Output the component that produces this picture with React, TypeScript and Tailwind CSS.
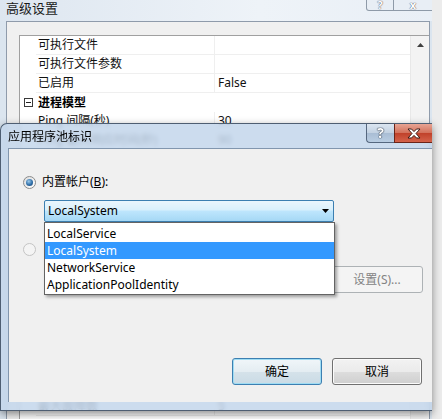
import React from 'react';

const font = "font-['Noto_Sans','Noto_Sans_CJK_SC',sans-serif]";

type Row = { name: string; value?: string; category?: boolean };

const rows: Row[] = [
  { name: '可执行文件' },
  { name: '可执行文件参数' },
  { name: '已启用', value: 'False' },
  { name: '进程模型', category: true },
  { name: 'Ping 间隔(秒)', value: '30' },
  { name: 'Ping 最大响应时间(秒)', value: '90' },
  { name: '标识', value: 'ApplicationPoolIdentity' },
  { name: '加载用户配置文件', value: 'False' },
  { name: '启动时间限制(秒)', value: '90' },
  { name: '已启用 Ping', value: 'True' },
  { name: '关闭时间限制(秒)', value: '90' },
  { name: '空闲超时(分钟)', value: '20' },
  { name: '最大工作进程数', value: '1' },
  { name: '进程孤立', value: '' },
  { name: '可执行文件', value: '' },
  { name: '已启用', value: 'False' },
  { name: '快速故障防护', value: '' },
  { name: '服务不可用响应类型', value: 'HttpLevel' },
  { name: '故障间隔(分钟)', value: '5' },
  { name: '最大故障数', value: '5' },
];

const accounts = ['LocalService', 'LocalSystem', 'NetworkService', 'ApplicationPoolIdentity'];

function PropertyRow({ row }: { row: Row }) {
  if (row.category) {
    return (
      <div className="flex h-[19px] shrink-0 items-center">
        <div className="flex w-[16px] justify-center">
          <div className="flex h-[9px] w-[9px] items-center justify-center border border-[#3a3a3a] bg-white">
            <div className="h-px w-[5px] bg-[#222]" />
          </div>
        </div>
        <span className="pl-[2px] text-[12px] font-bold leading-[19px] text-black">{row.name}</span>
      </div>
    );
  }
  return (
    <div className="flex h-[19px] shrink-0">
      <div className="w-[16px]" />
      <div className="w-[179px] truncate border-r border-b border-[#efefef] pl-[2px] text-[12px] leading-[18px] text-[#111]">
        {row.name}
      </div>
      <div className="flex-1 truncate border-b border-[#efefef] pl-[3px] text-[12px] leading-[18px] text-[#111]">
        {row.value}
      </div>
    </div>
  );
}

function Radio({ checked, disabled }: { checked?: boolean; disabled?: boolean }) {
  return (
    <div
      className={`flex h-[13px] w-[13px] items-center justify-center rounded-full border ${
        disabled
          ? 'border-[#c4c4c4] bg-[#f4f4f4]'
          : 'border-[#8b8b8b] bg-[linear-gradient(135deg,#dcdcdc,#ffffff)]'
      }`}
    >
      {checked && (
        <div className="h-[7px] w-[7px] rounded-full bg-[radial-gradient(circle_at_40%_35%,#9ccaeb_0%,#2f6ea8_55%,#173f6b_100%)]" />
      )}
    </div>
  );
}

export default function App() {
  return (
    <div className={`relative flex h-[419px] w-[442px] overflow-hidden bg-[#ececec] ${font}`}>
      {/* background window: 高级设置 */}
      <div className="flex h-full w-[432px] flex-col bg-[#dbe5ef]">
        <div className="flex h-[21px] shrink-0 items-start justify-between bg-[linear-gradient(to_right,#dde6f0,#eef3f8_60%,#e9eff6)]">
          <span className="pt-px pl-[6px] text-[13px] leading-[15px] text-[#1a1a1a]">高级设置</span>
          <div className="flex">
            <div className="flex h-[11px] w-[28px] items-end justify-center rounded-bl-[3px] border-r border-b border-l border-[#8e9aa8] bg-[#e8eef5] text-[11px] font-bold leading-[11px] text-white [text-shadow:0_0_1px_#556,0_0_1px_#556]">
              ?
            </div>
            <div className="flex h-[11px] w-[38px] items-end justify-center border-b border-[#8e9aa8] bg-[#e8eef5] text-[11px] font-bold leading-[11px] text-white [text-shadow:0_0_1px_#556,0_0_1px_#556]">
              x
            </div>
          </div>
        </div>
        <div className="mr-[2px] ml-[6px] flex flex-1 flex-col border-t border-r border-l border-[#8f9bab] bg-[#f0f0f0] pt-[13px] pl-[12px]">
          <div className="flex flex-1 overflow-hidden border-t border-l border-[#a0a0a0] bg-white">
            <div className="flex flex-1 flex-col">
              {rows.map((r, i) => (
                <PropertyRow key={i} row={r} />
              ))}
            </div>
            <div className="flex w-[19px] flex-col border-l border-[#e8e8e8] bg-[#f3f3f3]">
              <div className="flex h-[17px] items-center justify-center">
                <svg width="7" height="4" viewBox="0 0 7 4">
                  <path d="M0 4 L3.5 0 L7 4 Z" fill="#404040" />
                </svg>
              </div>
            </div>
          </div>
        </div>
      </div>
      <div className="w-[10px]" />

      {/* foreground dialog: 应用程序池标识 */}
      <div className="absolute top-[123px] left-0 flex h-[288px] w-[432px] flex-col rounded-tl-[7px] border-t border-b border-l border-[#4e5e72] bg-[#c3d6eb]/85 shadow-[0_3px_8px_rgba(0,0,0,0.45)] backdrop-blur-[2px]">
        <div className="flex h-[24px] shrink-0 items-start justify-between">
          <span className="pt-[5px] pl-[7px] text-[12px] leading-[15px] text-black">应用程序池标识</span>
          <div className="flex">
            <div className="flex h-[19px] w-[28px] items-center justify-center rounded-bl-[4px] border-b border-l border-[#55677e] bg-[linear-gradient(to_bottom,#dbe5f0,#c2d1e2_50%,#a9bdd4_51%,#b9cde2)] text-[14px] font-bold leading-[14px] text-white [text-shadow:0_0_1px_#2c3a4c,0_0_1px_#2c3a4c,0_0_1px_#2c3a4c]">
              ?
            </div>
            <div className="flex h-[19px] w-[38px] items-center justify-center border-b border-l border-[#6b2418] bg-[linear-gradient(to_bottom,#e8a493,#d2705a_50%,#c0412a_51%,#d4624a)]">
              <svg width="14" height="11" viewBox="0 0 14 11">
                <path
                  d="M1 1 L4.5 1 L7 3.6 L9.5 1 L13 1 L9 5.5 L13 10 L9.5 10 L7 7.4 L4.5 10 L1 10 L5 5.5 Z"
                  fill="#fff"
                  stroke="#3b1a16"
                  strokeWidth="1"
                  strokeLinejoin="round"
                />
              </svg>
            </div>
          </div>
        </div>

        <div className="ml-[7px] flex flex-1 flex-col border-t border-l border-[#8196ae] bg-[#f0f0f0] text-[12px] text-black">
          <div className="mt-[25px] flex h-[16px] items-center pl-[14px]">
            <Radio checked />
            <span className="pl-[6px] leading-[16px]">
              内置帐户(<span className="underline">B</span>):
            </span>
          </div>

          <div className="relative mt-[10px] ml-[35px] w-[290px]">
            <div className="flex h-[22px] items-center justify-between rounded-[2px] border border-[#3c7fb1] bg-[linear-gradient(to_bottom,#eaf6fd,#d9f0fc_45%,#bee6fd_50%,#a5d8f5)] pr-[4px] pl-[3px]">
              <span className="leading-[20px]">LocalSystem</span>
              <svg width="7" height="4" viewBox="0 0 7 4">
                <path d="M0 0 L7 0 L3.5 4 Z" fill="#000" />
              </svg>
            </div>
            <div className="absolute top-full left-0 z-10 flex h-[73px] w-[291px] flex-col border border-[#646464] bg-white pt-[2px] shadow-[2px_2px_3px_rgba(0,0,0,0.35)]">
              {accounts.map((a) => (
                <div
                  key={a}
                  className={`h-[17px] shrink-0 pl-[2px] leading-[17px] ${
                    a === 'LocalSystem' ? 'bg-[#3399ff] text-white' : 'text-black'
                  }`}
                >
                  {a}
                </div>
              ))}
            </div>
          </div>

          <div className="mt-[19px] flex h-[16px] items-center pl-[14px]">
            <Radio disabled />
          </div>

          <div className="mt-[9px] flex items-center justify-end pr-[9px]">
            <div className="flex h-[27px] w-[92px] items-center justify-center rounded-[3px] border border-[#adb2b5] bg-[#f4f4f4] text-[#838383]">
              设置(S)...
            </div>
          </div>

          <div className="flex-1" />

          <div className="flex justify-end gap-[10px] pr-[10px] pb-[17px]">
            <div className="flex h-[27px] w-[90px] items-center justify-center rounded-[3px] border border-[#3c7fb1] bg-[linear-gradient(to_bottom,#f0f6f9,#e4edf2_50%,#d5e2ea_51%,#cadbe5)] shadow-[inset_0_0_0_1px_#9fdcf3]">
              确定
            </div>
            <div className="flex h-[27px] w-[90px] items-center justify-center rounded-[3px] border border-[#707070] bg-[linear-gradient(to_bottom,#f2f2f2,#ebebeb_50%,#dddddd_51%,#cfcfcf)] shadow-[inset_0_0_0_1px_#fbfbfb]">
              取消
            </div>
          </div>
        </div>
        <div className="h-[8px] shrink-0" />
      </div>
    </div>
  );
}
